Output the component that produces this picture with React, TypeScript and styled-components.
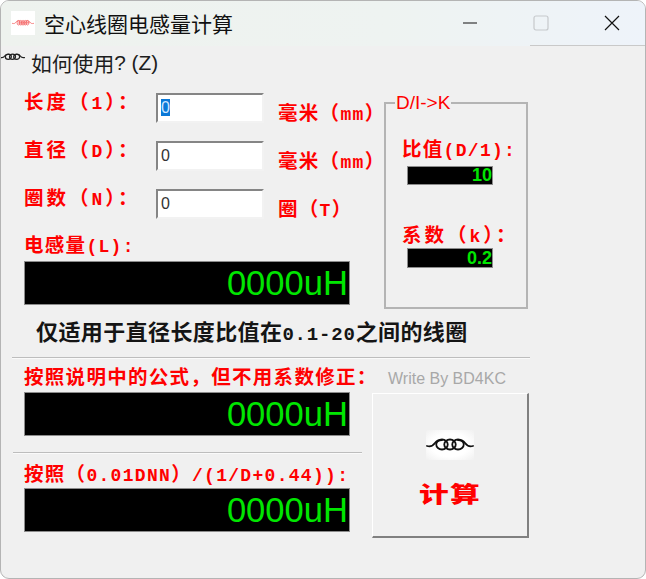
import React from "react";
import styled, { createGlobalStyle } from "styled-components";

const Global = createGlobalStyle`
  html, body { margin: 0; padding: 0; background: #fff; }
  #root { width: 646px; height: 579px; }
`;

const cjk = `"Noto Sans CJK SC", "Liberation Sans", sans-serif`;
const labelFont = `"Liberation Mono", "Noto Sans CJK SC", monospace`;

const Window = styled.div`
  box-sizing: border-box;
  width: 646px;
  height: 579px;
  background: #f0f0f0;
  border: 1px solid #b4b4b4;
  border-radius: 9px;
  overflow: hidden;
  display: flex;
  flex-direction: column;
  font-family: ${cjk};
`;

const TitleBar = styled.div`
  position: relative;
  height: 45px;
  flex: none;
  display: flex;
  align-items: center;
  padding-left: 10px;
  background: linear-gradient(90deg, #eef2ee 0%, #eef3f1 60%, #eef3fa 100%);
  &::after {
    content: "";
    position: absolute;
    right: 0;
    bottom: 0;
    width: 115px;
    height: 1px;
    background: #c9c9c9;
  }
`;

const AppIcon = styled.div`
  width: 24px;
  height: 24px;
  background: #fff;
  display: flex;
  align-items: center;
  justify-content: center;
  margin-right: 9px;
  margin-top: -2px;
`;

const Title = styled.div`
  font-size: 21px;
  line-height: 24px;
  color: #111;
  flex: 1;
  margin-top: -2px;
`;

const WinButton = styled.div`
  width: 71px;
  display: flex;
  justify-content: center;
  align-items: center;
  margin-top: -2px;
  line-height: 0;
`;

const Controls = styled.div`
  display: flex;
  margin-right: -2px;
`;

const MenuBar = styled.div`
  height: 38px;
  flex: none;
  display: flex;
  align-items: center;
  font-size: 20.8px;
  color: #1d1d1d;
  white-space: pre;
  padding-bottom: 4px;
  box-sizing: border-box;
`;

const MenuLatin = styled.span`
  font-family: "Liberation Sans", sans-serif;
`;

const MenuIcon = styled.div`
  width: 31px;
  margin-top: -14px;
  margin-left: -1px;
  line-height: 0;
`;

const Content = styled.div`
  padding: 9px 0 0 10px;
  display: flex;
  flex-direction: column;
`;

const Upper = styled.div`
  display: flex;
`;

const LeftCol = styled.div`
  width: 363px;
  padding-left: 13px;
  box-sizing: border-box;
`;

const FormRow = styled.div`
  display: flex;
  height: 48px;
`;

const Label = styled.div`
  font-family: ${labelFont};
  font-weight: 700;
  color: #ff0000;
  font-size: 18px;
  line-height: 20px;
  letter-spacing: 1.3px;
  white-space: pre;
  flex: none;
`;

const Han = styled.span`
  font-family: "Noto Sans CJK SC", sans-serif;
  font-size: 19.5px;
`;

const FieldLabel = styled(Label)`
  width: 132px;
  margin-top: -2px;
  letter-spacing: 3px;
`;

const Input = styled.div`
  box-sizing: border-box;
  flex: none;
  width: 108px;
  height: 30px;
  background: #fff;
  border-style: solid;
  border-width: 2px;
  border-color: #858585 #f2f2f2 #f2f2f2 #858585;
  font-family: "Liberation Sans", sans-serif;
  font-size: 16px;
  line-height: 26px;
  color: #333;
  padding-left: 3px;
`;

const Selected = styled.span`
  background: #0a78d7;
  color: #cfe6ff;
`;

const Unit = styled(Label)`
  margin: 9px 0 0 14px;
`;

const Display = styled.div`
  box-sizing: border-box;
  width: 326px;
  height: 44px;
  background: #000;
  border: 1px solid #8c8c8c;
  color: #00e600;
  font-family: "Liberation Sans", sans-serif;
  font-size: 34.6px;
  line-height: 42px;
  text-align: right;
  padding-right: 1px;
  overflow: hidden;
`;

const ResultLabel = styled(Label)<{ $top: number; $gap: number }>`
  margin-top: ${(p) => p.$top}px;
  margin-bottom: ${(p) => p.$gap}px;
  height: 20px;
`;

const Group = styled.fieldset`
  box-sizing: border-box;
  flex: none;
  width: 144px;
  height: 216px;
  margin: 0 0 -4px 10px;
  padding: 0 0 0 16px;
  border: 2px solid #b4b4b4;
  min-inline-size: 0;
`;

const Legend = styled.legend`
  padding: 0 1px;
  margin-left: -7px;
  font-family: "Liberation Sans", sans-serif;
  font-size: 19px;
  line-height: 20px;
  color: #ff0000;
`;

const GroupLabel = styled(Label)<{ $top: number; $gap: number; $wide?: boolean }>`
  margin-top: ${(p) => p.$top}px;
  margin-bottom: ${(p) => p.$gap}px;
  ${(p) => (p.$wide ? "letter-spacing: 3px;" : "")}
`;

const MiniDisplay = styled.div<{ $h: number }>`
  box-sizing: border-box;
  width: 86px;
  height: ${(p) => p.$h}px;
  margin-left: 5px;
  background: #000;
  border: 1px solid #8c8c8c;
  color: #00e600;
  font-family: "Liberation Sans", sans-serif;
  font-size: 18px;
  font-weight: 700;
  line-height: ${(p) => p.$h - 2}px;
  text-align: right;
`;

const Note = styled.div`
  margin: 13px 0 0 25px;
  font-size: 22px;
  line-height: 24px;
  font-weight: 700;
  letter-spacing: 0.4px;
  color: #151515;
  font-family: ${cjk};
  white-space: pre;
`;

const Mono = styled.span`
  font-family: "Liberation Mono", monospace;
  font-size: 19px;
  letter-spacing: 0.8px;
`;

const Rule = styled.div<{ $w: number; $l: number; $top: number; $bottom: number }>`
  box-sizing: content-box;
  height: 1px;
  width: ${(p) => p.$w}px;
  margin: ${(p) => p.$top}px 0 ${(p) => p.$bottom}px ${(p) => p.$l}px;
  background: #bdbdbd;
  border-bottom: 1px solid #fafafa;
`;

const Lower = styled.div`
  display: flex;
  margin-top: 14px;
`;

const LowerLeft = styled.div`
  width: 350px;
  flex: none;
`;

const LowerBlock = styled.div`
  padding-left: 13px;
`;

const LowerRight = styled.div`
  width: 158px;
  margin-left: 11px;
  display: flex;
  flex-direction: column;
`;

const Credit = styled.div`
  font-family: "Liberation Sans", sans-serif;
  font-size: 16px;
  line-height: 20px;
  color: #a8a8a8;
  padding-left: 16px;
  height: 24px;
  margin-top: -4px;
`;

const CalcButton = styled.div`
  box-sizing: border-box;
  width: 157px;
  height: 145px;
  background: #f0f0f0;
  border-style: solid;
  border-width: 1px 2px 2px 1px;
  border-color: #fff #808080 #808080 #fff;
  display: flex;
  flex-direction: column;
  align-items: center;
  padding-top: 36px;
`;

const CoilPatch = styled.div`
  width: 48px;
  height: 30px;
  background: radial-gradient(ellipse at center, #fff 55%, #f0f0f0 100%);
  display: flex;
  align-items: flex-start;
  padding-top: 6px;
  box-sizing: border-box;
  line-height: 0;
`;

const CalcText = styled.div`
  margin-top: 19px;
  font-size: 22px;
  line-height: 26px;
  font-weight: 900;
  color: #ff0000;
  letter-spacing: 1px;
  transform: scaleX(1.35);
`;

const Coil = ({ w, h, color, sw = 2, loops = 3 }: { w: number; h: number; color: string; sw?: number; loops?: number }) => {
  const step = 24 / loops;
  const centers = Array.from({ length: loops }, (_, i) => 12 + step / 2 + i * step);
  return (
    <svg width={w} height={h} viewBox="0 0 48 16" fill="none" stroke={color} strokeWidth={sw} strokeLinecap="round">
      <path d="M1 10c4 1 6 0 8-3s5-3 7-3M32 4c2 0 5 0 7 3s4 4 8 3" />
      {centers.map((cx) => (
        <ellipse key={cx} cx={cx} cy={8.5} rx={step * 0.72} ry={5} />
      ))}
    </svg>
  );
};

const Result = ({ top, gap, children }: { top: number; gap: number; children: React.ReactNode }) => (
  <>
    <ResultLabel $top={top} $gap={gap}>{children}</ResultLabel>
    <Display>0000uH</Display>
  </>
);

export default function App() {
  return (
    <Window>
      <Global />
      <TitleBar>
        <AppIcon>
          <Coil w={22} h={13} color="#f46a6a" sw={1.8} loops={6} />
        </AppIcon>
        <Title>空心线圈电感量计算</Title>
        <Controls>
          <WinButton>
            <svg width="16" height="16" viewBox="0 0 16 16"><path d="M1 8h14" stroke="#111" strokeWidth="1.2" /></svg>
          </WinButton>
          <WinButton>
            <svg width="16" height="16" viewBox="0 0 16 16"><rect x="1" y="1" width="14" height="14" rx="2" fill="none" stroke="#c6c9cc" strokeWidth="1.2" /></svg>
          </WinButton>
          <WinButton>
            <svg width="16" height="16" viewBox="0 0 16 16"><path d="M1 1l14 14M15 1L1 15" stroke="#111" strokeWidth="1.2" /></svg>
          </WinButton>
        </Controls>
      </TitleBar>
      <MenuBar>
        <MenuIcon>
          <Coil w={25} h={9} color="#222" sw={2.4} />
        </MenuIcon>
        如何使用<MenuLatin>? (Z)</MenuLatin>
      </MenuBar>
      <Content>
        <Upper>
          <LeftCol>
            <FormRow>
              <FieldLabel><Han>长度（</Han>1<Han>）：</Han></FieldLabel>
              <Input><Selected>0</Selected></Input>
              <Unit><Han>毫米（</Han>mm<Han>）</Han></Unit>
            </FormRow>
            <FormRow>
              <FieldLabel><Han>直径（</Han>D<Han>）：</Han></FieldLabel>
              <Input>0</Input>
              <Unit><Han>毫米（</Han>mm<Han>）</Han></Unit>
            </FormRow>
            <FormRow>
              <FieldLabel><Han>圈数（</Han>N<Han>）：</Han></FieldLabel>
              <Input>0</Input>
              <Unit><Han>圈（</Han>T<Han>）</Han></Unit>
            </FormRow>
            <Result top={-3} gap={7}><Han>电感量</Han>(L):</Result>
          </LeftCol>
          <Group>
            <Legend>D/I-&gt;K</Legend>
            <GroupLabel $top={25} $gap={5}><Han>比值</Han>(D/1):</GroupLabel>
            <MiniDisplay $h={19}>10</MiniDisplay>
            <GroupLabel $top={39} $gap={1} $wide><Han>系数（</Han>k<Han>）：</Han></GroupLabel>
            <MiniDisplay $h={20}>0.2</MiniDisplay>
          </Group>
        </Upper>
        <Note>仅适用于直径长度比值在<Mono>0.1-20</Mono>之间的线圈</Note>
        <Rule $w={518} $l={1} $top={10} $bottom={0} />
        <Lower>
          <LowerLeft>
            <LowerBlock>
              <Result top={-7} gap={6}><Han>按照说明中的公式，但不用系数修正：</Han></Result>
            </LowerBlock>
            <Rule $w={349} $l={2} $top={16} $bottom={14} />
            <LowerBlock>
              <Result top={-5} gap={5}><Han>按照（</Han>0.01DNN<Han>）</Han>/(1/D+0.44)):</Result>
            </LowerBlock>
          </LowerLeft>
          <LowerRight>
            <Credit>Write By BD4KC</Credit>
            <CalcButton>
              <CoilPatch>
                <Coil w={48} h={16} color="#111" sw={1.8} />
              </CoilPatch>
              <CalcText>计算</CalcText>
            </CalcButton>
          </LowerRight>
        </Lower>
      </Content>
    </Window>
  );
}
